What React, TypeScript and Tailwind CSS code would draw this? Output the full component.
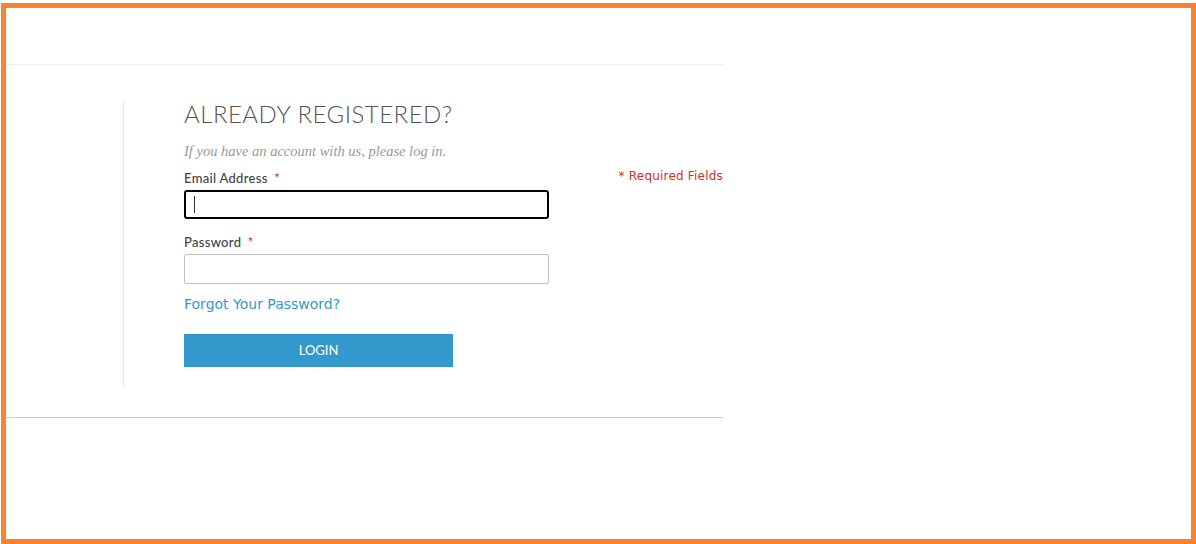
export default function App() {
  return (
    <div className="h-[544px] w-[1196px] overflow-hidden bg-white pl-[1px] pt-[3px]">
      <div className="flex h-[541px] w-[1195px] flex-col border-[5px] border-[#fd8230] bg-white">
        {/* top header area */}
        <div className="h-[57px] w-[717px] border-b border-[#ededed]" />

        <div className="flex w-[717px] flex-col border-b border-[#cccccc] pt-[35px] pb-[30px]">
          <div className="flex">
            <div className="w-[117px] shrink-0" />
            <div className="flex flex-1 border-l border-[#e8e8e8] pl-[60px] pb-[20px]">
              <div className="flex w-[365px] flex-col">
                <h2
                  className="text-[24px] leading-[28px] font-light tracking-[0.5px] text-[#555555]"
                  style={{ fontFamily: 'Lato, "Open Sans", sans-serif' }}
                >
                  ALREADY REGISTERED?
                </h2>
                <p
                  className="mt-[14px] text-[14.5px] leading-[18px] italic text-[#999999]"
                  style={{ fontFamily: '"Liberation Serif", "DejaVu Serif", serif' }}
                >
                  If you have an account with us, please log in.
                </p>

                <div style={{ fontFamily: 'Lato, "Open Sans", sans-serif' }}>
                  <label className="mt-[10px] block text-[13px] leading-[16px] font-medium tracking-[0.3px] text-[#444444]">
                    Email Address <span className="ml-[3px] text-[#e02b27]">*</span>
                  </label>
                  <div className="mt-[4px] flex h-[29px] items-center rounded-[3px] border-2 border-black bg-white pl-[8px]">
                    <span className="h-[17px] w-px bg-[#333333]" />
                  </div>

                  <label className="mt-[15px] block text-[13px] leading-[16px] font-medium tracking-[0.3px] text-[#444444]">
                    Password <span className="ml-[3px] text-[#e02b27]">*</span>
                  </label>
                  <div className="mt-[4px] h-[30px] rounded-[2px] border border-[#c2c2c2] bg-white" />
                </div>

                <a
                  className="mt-[11px] block text-[14px] leading-[18px] text-[#3399cc]"
                  style={{ fontFamily: '"DejaVu Sans", Verdana, sans-serif' }}
                >
                  Forgot Your Password?
                </a>

                <button
                  className="mt-[21px] flex h-[33px] w-[269px] items-center justify-center bg-[#3399cc] text-[13px] text-white"
                  style={{ fontFamily: 'Lato, "Open Sans", sans-serif' }}
                >
                  LOGIN
                </button>
              </div>
              <div className="flex flex-1 justify-end pt-[68px]">
                <span
                  className="text-[12px] leading-[16px] tracking-[0.2px] text-[#e02b27]"
                  style={{ fontFamily: '"DejaVu Sans", Verdana, sans-serif' }}
                >
                  * Required Fields
                </span>
              </div>
            </div>
          </div>
        </div>
      </div>
    </div>
  )
}
